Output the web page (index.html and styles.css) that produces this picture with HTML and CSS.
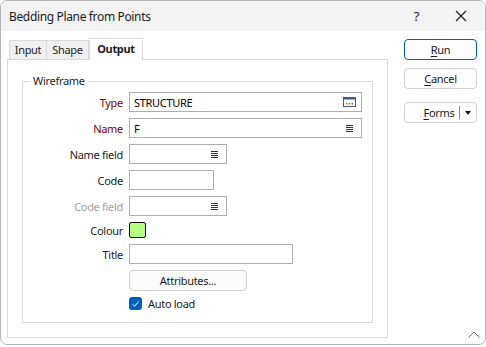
FILE: index.html
```html
<!DOCTYPE html>
<html lang="en">
<head>
  <meta charset="UTF-8">
  <title>Bedding Plane from Points</title>
  <link rel="stylesheet" href="styles.css">
</head>
<body>
  <div class="window">
    <header class="titlebar">
      <span class="title">Bedding Plane from Points</span>
      <span class="help">?</span>
      <svg class="close" width="12" height="12" viewBox="0 0 12 12">
        <path d="M1 1 L11 11 M11 1 L1 11" stroke="#1b1b1b" stroke-width="1.1" fill="none"/>
      </svg>
    </header>

    <div class="main">
      <div class="tabs-area">
        <div class="tabstrip">
          <div class="tab tab-input">Input</div>
          <div class="tab tab-shape">Shape</div>
          <div class="tab tab-output active">Output</div>
        </div>

        <div class="panel">
          <fieldset class="group">
            <legend>Wireframe</legend>
            <div class="form">
              <label class="req">Type</label>
              <div class="field wide">
                <span class="value">STRUCTURE</span>
                <svg class="browse" width="13" height="10" viewBox="0 0 13 10">
                  <rect x="0.5" y="0.5" width="12" height="9" fill="#fff" stroke="#3d5a80"/>
                  <rect x="0.5" y="0.5" width="12" height="2" fill="#3d5a80"/>
                  <rect x="3" y="6" width="1.5" height="1.5" fill="#a06a1e"/>
                  <rect x="5.8" y="6" width="1.5" height="1.5" fill="#a06a1e"/>
                  <rect x="8.6" y="6" width="1.5" height="1.5" fill="#a06a1e"/>
                </svg>
              </div>

              <label class="req">Name</label>
              <div class="field wide">
                <span class="value">F</span>
                <span class="list-icon"></span>
              </div>

              <label>Name field</label>
              <div class="field medium"><span class="list-icon"></span></div>

              <label>Code</label>
              <div class="field short"></div>

              <label class="disabled">Code field</label>
              <div class="field medium"><span class="list-icon"></span></div>

              <label>Colour</label>
              <div class="swatch-cell"><span class="swatch"></span></div>

              <label>Title</label>
              <div class="field title-field"></div>

              <span></span>
              <button class="attr-btn">Attributes...</button>

              <span></span>
              <div class="check-row">
                <span class="checkbox">
                  <svg width="9" height="8" viewBox="0 0 9 8">
                    <path d="M1.5 4.2 L3.6 6.2 L7.6 1.6" stroke="#fff" stroke-width="1" fill="none"/>
                  </svg>
                </span>
                <span>Auto load</span>
              </div>
            </div>
          </fieldset>
        </div>
      </div>

      <div class="side">
        <button class="btn default"><u>R</u>un</button>
        <button class="btn"><u>C</u>ancel</button>
        <button class="btn forms">
          <span class="forms-label"><u>F</u>orms</span>
          <span class="forms-arrow"></span>
        </button>
      </div>
    </div>

    <svg class="grip" width="12" height="7" viewBox="0 0 12 7">
      <path d="M0.5 6.5 L6 1 L11.5 6.5" stroke="#6e6e6e" stroke-width="1" fill="none"/>
    </svg>
  </div>
</body>
</html>
```

FILE: styles.css
```css
body {
  margin: 0;
  background: #fff;
  font-family: "Noto Sans", sans-serif;
  font-size: 11px;
  letter-spacing: -0.3px;
  color: #000;
}

.window {
  position: relative;
  box-sizing: border-box;
  width: 486px;
  height: 345px;
  border: 1px solid #b4b4b4;
  border-radius: 7px;
  background: #fff;
  overflow: hidden;
}

.titlebar {
  display: flex;
  align-items: center;
  height: 30px;
  padding-left: 8px;
  background: #f3f3f3;
}

.title {
  flex: 1;
  font-size: 12px;
  letter-spacing: -0.35px;
  color: #1b1b1b;
}

.help {
  font-size: 13px;
  color: #1b1b1b;
  margin-right: 36px;
}

.close {
  margin-right: 18px;
}

.main {
  display: flex;
  padding-top: 7px;
}

.tabs-area {
  margin-left: 6px;
  width: 381px;
}

.tabstrip {
  display: flex;
  align-items: flex-end;
  height: 21px;
  padding-left: 2px;
}

.tab {
  box-sizing: border-box;
  height: 19px;
  line-height: 17px;
  text-align: center;
  border: 1px solid #d9d9d9;
  border-bottom: none;
  background: #f0f0f0;
  color: #1b1b1b;
}

.tab-input {
  width: 38px;
}

.tab-shape {
  width: 42px;
  border-left: none;
}

.tab-output {
  width: 54px;
}

.tab.active {
  position: relative;
  height: 22px;
  margin-bottom: -1px;
  line-height: 20px;
  background: #fff;
  font-weight: 700;
  z-index: 1;
}

.panel {
  box-sizing: border-box;
  height: 279px;
  border: 1px solid #d9d9d9;
  padding: 14px 14px 0 14px;
}

.group {
  box-sizing: border-box;
  height: 249px;
  margin: 0;
  padding: 4px 0 0 0;
  border: 1px solid #d9d9d9;
}

.group legend {
  margin-left: 7px;
  padding: 0 3px;
  line-height: 14px;
  color: #1b1b1b;
}

.form {
  display: grid;
  grid-template-columns: 100px auto;
  grid-template-rows: 20px 20px 20px 20px 20px 16px 20px 21px 13px;
  column-gap: 6px;
  row-gap: 6px;
  justify-items: start;
  align-items: center;
}

.form label {
  justify-self: end;
  color: #1b1b1b;
}

.form label.req {
  color: #7a0000;
}

.form label.disabled {
  color: #a0a0a0;
}

.field {
  box-sizing: border-box;
  display: flex;
  align-items: center;
  height: 20px;
  padding: 0 4px 0 4px;
  border: 1px solid #adadad;
  background: #fff;
}

.field .value {
  flex: 1;
  color: #000;
}

.wide {
  width: 233px;
}

.medium {
  width: 98px;
  justify-content: flex-end;
}

.short {
  width: 85px;
}

.title-field {
  width: 164px;
}

.list-icon {
  display: block;
  width: 7px;
  height: 7px;
  margin-right: 4px;
  margin-left: auto;
  background: repeating-linear-gradient(#333 0 1px, transparent 1px 2px);
}

.browse {
  margin-right: 1px;
}

.swatch {
  display: block;
  box-sizing: border-box;
  width: 17px;
  height: 16px;
  border: 1px solid #111;
  border-radius: 2px;
  background: #b6ff80;
}

.attr-btn {
  box-sizing: border-box;
  width: 118px;
  height: 21px;
  margin: 0;
  padding: 0;
  border: 1px solid #d0d0d0;
  border-radius: 4px;
  background: #fbfbfb;
  font-family: inherit;
  font-size: 11px;
  letter-spacing: inherit;
  color: #1b1b1b;
}

.check-row {
  display: flex;
  align-items: center;
  gap: 6px;
  color: #1b1b1b;
}

.checkbox {
  display: flex;
  align-items: center;
  justify-content: center;
  width: 13px;
  height: 13px;
  border-radius: 3px;
  background: #005fb8;
}

.side {
  display: flex;
  flex-direction: column;
  margin-left: 16px;
  padding-top: 1px;
}

.btn {
  box-sizing: border-box;
  width: 73px;
  height: 21px;
  margin: 0 0 8px 0;
  padding: 0;
  border: 1px solid #d0d0d0;
  border-radius: 4px;
  background: #fdfdfd;
  font-family: inherit;
  font-size: 11px;
  letter-spacing: inherit;
  color: #1b1b1b;
}

.btn.default {
  border-color: #005fb8;
}

.btn u {
  text-decoration-thickness: 1px;
  text-underline-offset: 2px;
}

.btn.forms {
  display: flex;
  align-items: center;
  margin-top: 5px;
}

.forms-label {
  flex: 1;
  padding-left: 14px;
  height: 13px;
  line-height: 13px;
  border-right: 1px solid #8a8a8a;
  text-align: center;
}

.forms-arrow {
  width: 0;
  height: 0;
  margin: 0 5px 0 5px;
  border-left: 3.5px solid transparent;
  border-right: 3.5px solid transparent;
  border-top: 4px solid #1b1b1b;
}

.grip {
  position: absolute;
  right: 5px;
  bottom: 6px;
}
```
